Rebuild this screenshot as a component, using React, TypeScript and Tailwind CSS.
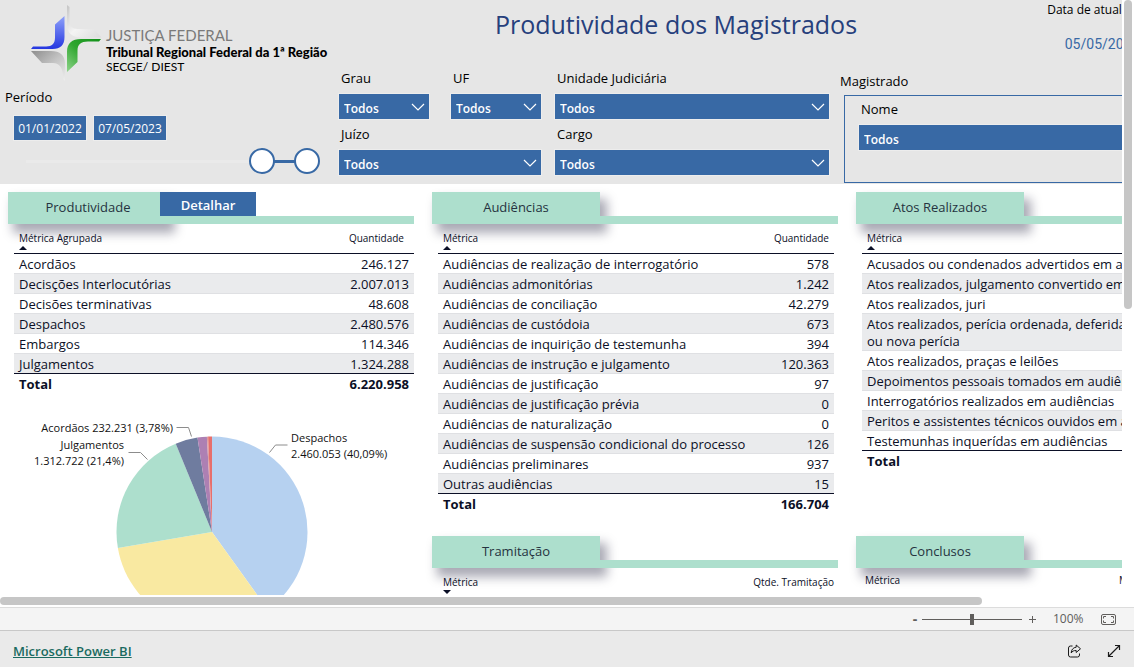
import { useState, type ReactNode } from "react";

type Row = [string, string];

const produtividade: Row[] = [
  ["Acordãos", "246.127"],
  ["Decisções Interlocutórias", "2.007.013"],
  ["Decisões terminativas", "48.608"],
  ["Despachos", "2.480.576"],
  ["Embargos", "114.346"],
  ["Julgamentos", "1.324.288"],
];

const audiencias: Row[] = [
  ["Audiências de realização de interrogatório", "578"],
  ["Audiências admonitórias", "1.242"],
  ["Audiências de conciliação", "42.279"],
  ["Audiências de custódoia", "673"],
  ["Audiências de inquirição de testemunha", "394"],
  ["Audiências de instrução e julgamento", "120.363"],
  ["Audiências de justificação", "97"],
  ["Audiências de justificação prévia", "0"],
  ["Audiências de naturalização", "0"],
  ["Audiências de suspensão condicional do processo", "126"],
  ["Audiências preliminares", "937"],
  ["Outras audiências", "15"],
];

const atos: Row[] = [
  ["Acusados ou condenados advertidos em audiência", ""],
  ["Atos realizados, julgamento convertido em diligência", ""],
  ["Atos realizados, juri", ""],
  ["Atos realizados, perícia ordenada, deferida/indeferida\nou nova perícia", ""],
  ["Atos realizados, praças e leilões", ""],
  ["Depoimentos pessoais tomados em audiências", ""],
  ["Interrogatórios realizados em audiências", ""],
  ["Peritos e assistentes técnicos ouvidos em audiências", ""],
  ["Testemunhas inquerídas em audiências", ""],
];

function Filter({ id, label, className = "" }: { id: string; label: string; className?: string }) {
  return (
    <div className={`flex flex-col gap-[7px] ${className}`}>
      <label htmlFor={id} className="pl-0.5 text-[13px] leading-[17px] text-black">
        {label}
      </label>
      <div className="relative">
        <select
          id={id}
          className="block h-[25px] w-full appearance-none bg-[#3869a5] pt-1 pl-[5px] text-xs font-semibold text-white outline-1 outline-[#ededed]"
        >
          <option>Todos</option>
        </select>
        <svg className="pointer-events-none absolute top-2 right-1 h-[10px] w-[14px]" viewBox="0 0 14 10" fill="none" stroke="white" strokeWidth="1.2">
          <path d="M1 2l6 6 6-6" />
        </svg>
      </div>
    </div>
  );
}

function SectionHeader({ title, action }: { title: string; action?: ReactNode }) {
  return (
    <div className="flex h-8">
      <h2
        className={`flex items-center justify-center bg-[#addfcd] text-[13px] text-[#25333f] shadow-[6px_8px_10px_1px_rgba(20,20,50,0.36)] ${action ? "w-40" : "w-42"}`}
      >
        {title}
      </h2>
      <div className="relative flex flex-1 flex-col justify-end">
        {action}
        <div className="h-2 bg-[#addfcd]" />
      </div>
    </div>
  );
}

function Caret({ down = false }: { down?: boolean }) {
  return (
    <svg className="block h-1 w-2" viewBox="0 0 8 4" fill="#0b0f26">
      <path d={down ? "M0 0h8L4 4z" : "M0 4h8L4 0z"} />
    </svg>
  );
}

function MetricTable({
  heading,
  valueHeading,
  rows,
  total,
  valuePad = "pr-[5px]",
  className = "",
}: {
  heading: string;
  valueHeading: string;
  rows: Row[];
  total: string;
  valuePad?: string;
  className?: string;
}) {
  return (
    <div className={`relative ${className}`}>
      <table className="w-full border-separate border-spacing-0 text-[13px] leading-[17px] whitespace-pre text-[#0b0f26]">
        <thead className="text-[10px] leading-[14px]">
          <tr>
            <th className="border-b border-[#0b0f26] pt-[7px] pb-[3px] pl-[5px] text-left font-normal">
              {heading}
              <div className="pt-px">
                <Caret />
              </div>
            </th>
            <th className={`border-b border-[#0b0f26] pt-[7px] text-right align-top font-normal ${valuePad}`}>{valueHeading}</th>
          </tr>
        </thead>
        <tbody>
          {rows.map(([name, value], i) => {
            const line = i === rows.length - 1 ? "border-[#0b0f26]" : "border-[#dfe0e3]";
            return (
              <tr key={name} className={i % 2 ? "bg-[#eaebed]" : ""}>
                <td className={`border-b pt-0.5 pl-[5px] ${line}`}>{name}</td>
                <td className={`border-b pt-0.5 pr-[5px] text-right ${line}`}>{value}</td>
              </tr>
            );
          })}
        </tbody>
        <tfoot>
          <tr className="font-bold">
            <td className="pt-0.5 pl-[5px]">Total</td>
            <td className="pt-0.5 pr-[5px] text-right">{total}</td>
          </tr>
        </tfoot>
      </table>
    </div>
  );
}

const CX = 204;
const CY = 132;
const R = 95.5;
const slices = [
  { from: 0, to: 0.4009, color: "#b6d1f0" },
  { from: 0.4009, to: 0.723, color: "#f9e9a1" },
  { from: 0.723, to: 0.938, color: "#addfcd" },
  { from: 0.938, to: 0.9757, color: "#6f7c9f" },
  { from: 0.9757, to: 0.9915, color: "#ad80b3" },
  { from: 0.9915, to: 0.9935, color: "#dc9a9c" },
  { from: 0.9935, to: 1, color: "#e76f6c" },
];

function arc(from: number, to: number) {
  const p = (t: number) =>
    `${(CX + R * Math.sin(t * 2 * Math.PI)).toFixed(2)} ${(CY - R * Math.cos(t * 2 * Math.PI)).toFixed(2)}`;
  return `M${CX} ${CY}L${p(from)}A${R} ${R} 0 0 1 ${p(to)}Z`;
}

function PieChart() {
  return (
    <svg className="mt-[7px] block h-[240px] w-[406px]" viewBox="0 0 406 240" role="img" aria-label="Produtividade por métrica">
      {slices.map((s) => (
        <path key={s.color} d={arc(s.from, s.to)} fill={s.color} />
      ))}
      <g fill="none" stroke="#8c8c8c">
        <path d="M168.500 27.500h12l3 9" />
        <path d="M120.500 52.500h12l7 7" />
        <path d="M261.500 52.500l6-7.500h12" />
      </g>
      <g className="text-[11px]" fill="#111">
        <text x="165" y="32" textAnchor="end">Acordãos 232.231 (3,78%)</text>
        <text x="116" y="49" textAnchor="end">Julgamentos</text>
        <text x="116" y="65" textAnchor="end">1.312.722 (21,4%)</text>
        <text x="283" y="42">Despachos</text>
        <text x="283" y="58">2.460.053 (40,09%)</text>
      </g>
    </svg>
  );
}

function Logo() {
  return (
    <svg className="h-[76px] w-[72px]" viewBox="0 0 72 76">
      <defs>
        <linearGradient id="lb" x1="0" y1="0" x2="0" y2="1">
          <stop offset="0" stopColor="#8fa2fa" />
          <stop offset="1" stopColor="#2436e0" />
        </linearGradient>
        <linearGradient id="lg" x1="1" y1="0" x2="0" y2="1">
          <stop offset="0" stopColor="#12901a" />
          <stop offset="0.5" stopColor="#2fa62f" />
          <stop offset="1" stopColor="#8ed48a" />
        </linearGradient>
        <linearGradient id="lw" x1="0" y1="0" x2="1" y2="1">
          <stop offset="0" stopColor="#c4c4c4" />
          <stop offset="0.5" stopColor="#f4f4f4" />
          <stop offset="1" stopColor="#dcdcdc" />
        </linearGradient>
        <linearGradient id="ls" x1="0" y1="0" x2="1" y2="1">
          <stop offset="0" stopColor="#8d8d8d" />
          <stop offset="0.5" stopColor="#c2c2c2" />
          <stop offset="1" stopColor="#eeeeee" />
        </linearGradient>
      </defs>
      <path d="M34.500 11v21c0 8-4 12-12 12H1l2-2.500h13c6 0 9-3 9-9V19.500z" fill="url(#lb)" />
      <path d="M37 0l2.500 2v14c0 5 3 8 8 8l17 .5 7 8H51c-9 0-14-5-14-13z" fill="url(#lw)" />
      <path d="M1 46h20c9 0 14 4 14 13v17l-2-2V69c-1-7-4-11-10-11H12z" fill="url(#ls)" />
      <path d="M71 34l-2 2.500H58c-7 0-10.500 3-10.500 9V57L37 67V47c0-9 5-13 14-13z" fill="url(#lg)" />
    </svg>
  );
}

function PeriodSlider() {
  const [start, setStart] = useState(84);
  const [end, setEnd] = useState(100);
  const range =
    "pointer-events-none absolute inset-0 h-full w-full appearance-none bg-transparent [&::-webkit-slider-thumb]:pointer-events-auto [&::-webkit-slider-thumb]:size-[26px] [&::-webkit-slider-thumb]:appearance-none [&::-webkit-slider-thumb]:rounded-full [&::-webkit-slider-thumb]:border-2 [&::-webkit-slider-thumb]:border-solid [&::-webkit-slider-thumb]:border-[#3869a5] [&::-webkit-slider-thumb]:bg-white";
  return (
    <div className="relative mt-2 mr-[19px] ml-[13px] flex h-[26px] items-center px-[13px]">
      <div className="flex h-[3px] w-full bg-[#eaeaea]">
        <div style={{ width: `${start}%` }} />
        <div className="bg-[#3869a5]" style={{ width: `${end - start}%` }} />
      </div>
      <input type="range" aria-label="Início do período" className={range} value={start} onChange={(e) => setStart(Math.min(+e.target.value, end))} />
      <input type="range" aria-label="Fim do período" className={range} value={end} onChange={(e) => setEnd(Math.max(+e.target.value, start))} />
    </div>
  );
}

function ReportHeader() {
  const dateBox = "h-6 w-18 bg-[#3869a5] pt-px text-center text-xs text-white outline-1 outline-[#ededed]";
  return (
    <header className="flex h-46 bg-[#e6e6e6]">
      <div className="w-[339px] shrink-0">
        <div className="flex pt-[5px] pl-[30px]">
          <Logo />
          <div className="pt-5 pl-1 font-['Lato',sans-serif] whitespace-nowrap">
            <p className="text-[15px] leading-5 text-[#7a7a7a]">JUSTIÇA FEDERAL</p>
            <p className="text-[13px] leading-[14px] font-black text-black">Tribunal Regional Federal da 1ª Região</p>
            <p className="text-xs leading-4 text-black">SECGE/ DIEST</p>
          </div>
        </div>
        <div role="group" aria-labelledby="periodo" className="pt-2">
          <p id="periodo" className="pl-[5px] text-[13px] leading-[17px] text-black">
            Período
          </p>
          <div className="flex gap-2 pt-[10px] pl-[14px]">
            <input className={dateBox} aria-label="Data inicial" defaultValue="01/01/2022" />
            <input className={dateBox} aria-label="Data final" defaultValue="07/05/2023" />
          </div>
          <PeriodSlider />
        </div>
      </div>
      <div className="flex-1">
        <div className="flex h-[70px]">
          <h1 className="w-[674px] pt-2 text-center text-[25px] leading-8 text-[#26407c]">Produtividade dos Magistrados</h1>
          <div className="w-[178px] pt-px text-center whitespace-nowrap">
            <p className="text-xs leading-[17px] text-black">Data de atualização</p>
            <p className="mt-4 font-['Roboto',sans-serif] text-[14px] leading-5 text-[#3869a5]">05/05/2023</p>
          </div>
        </div>
        <div className="flex gap-[11px]">
          <div className="flex gap-[14px]">
            <div className="grid w-[202px] grid-cols-2 content-start gap-x-[22px] gap-y-[7px]">
              <Filter id="grau" label="Grau" />
              <Filter id="uf" label="UF" />
              <Filter id="juizo" label="Juízo" className="col-span-2" />
            </div>
            <div className="grid w-[274px] content-start gap-y-[7px]">
              <Filter id="unidade" label="Unidade Judiciária" />
              <Filter id="cargo" label="Cargo" />
            </div>
          </div>
          <div className="flex-1 pt-[3px]">
            <p className="text-[13px] leading-[17px] text-black">Magistrado</p>
            <div className="mt-[5px] mr-4 ml-1 h-[88px] border border-[#3869a5] px-[14px] pt-[5px]">
              <Filter id="nome" label="Nome" />
            </div>
          </div>
        </div>
      </div>
    </header>
  );
}

function Report() {
  return (
    <div className="min-h-[1149px] w-[1280px] bg-white">
      <ReportHeader />
      <div className="grid grid-cols-3 gap-x-[18px] pt-2 pr-[18px] pl-2">
        <section>
          <SectionHeader
            title="Produtividade"
            action={
              <button className="-ml-2 h-6 w-24 bg-[#3869a5] pt-1 text-[13px] font-semibold text-white">Detalhar</button>
            }
          />
          <MetricTable heading="Métrica Agrupada" valueHeading="Quantidade" rows={produtividade} total="6.220.958" valuePad="pr-[10px]" className="ml-1.5" />
          <PieChart />
        </section>
        <div>
          <section className="min-h-[344px]">
            <SectionHeader title="Audiências" />
            <MetricTable heading="Métrica" valueHeading="Quantidade" rows={audiencias} total="166.704" className="mr-1 ml-1.5" />
          </section>
          <section>
            <SectionHeader title="Tramitação" />
            <div className="relative mr-1 ml-[11px] flex justify-between pt-[7px] text-[10px] leading-[14px] text-[#0b0f26]">
              <div>
                Métrica
                <div className="pt-px">
                  <Caret down />
                </div>
              </div>
              <span>Qtde. Tramitação</span>
            </div>
          </section>
        </div>
        <div>
          <section className="min-h-[344px]">
            <SectionHeader title="Atos Realizados" />
            <MetricTable heading="Métrica" valueHeading="" rows={atos} total="" className="mr-1 ml-1.5" />
          </section>
          <section>
            <SectionHeader title="Conclusos" />
            <div className="relative ml-[9px] flex pt-[5px] text-[10px] leading-[14px] text-[#0b0f26]">
              <span className="w-[254px]">Métrica</span>
              <span>Magistrado</span>
            </div>
          </section>
        </div>
      </div>
    </div>
  );
}

export default function App() {
  const [zoom, setZoom] = useState(100);
  return (
    <div className="flex h-screen flex-col bg-white font-['Open_Sans','Noto_Sans',sans-serif]">
      <main className="flex min-h-0 flex-1">
        <div className="min-w-0 flex-1 overflow-hidden">
          <Report />
        </div>
        <div className="w-3 pl-0.5">
          <div className="h-[52%] w-2 rounded-full bg-[#c6c6c6]" />
        </div>
      </main>
      <div className="h-3 pt-0.5 pr-3">
        <div className="h-2 w-7/8 rounded-full bg-[#c6c6c6]" />
      </div>
      <div className="flex h-[23px] items-center justify-end border-t border-[#dcdcdc] bg-[#f4f4f4] pr-[18px] text-[#605e5c]">
        <button aria-label="Diminuir zoom" className="w-[14px] text-sm leading-5 font-bold">-</button>
        <input
          type="range"
          aria-label="Zoom"
          min={10}
          max={190}
          value={zoom}
          onChange={(e) => setZoom(+e.target.value)}
          className="h-4 w-[100px] appearance-none bg-[linear-gradient(#605e5c,#605e5c)] bg-[length:100%_1px] bg-center bg-no-repeat [&::-webkit-slider-thumb]:h-[11px] [&::-webkit-slider-thumb]:w-1 [&::-webkit-slider-thumb]:appearance-none [&::-webkit-slider-thumb]:bg-[#605e5c]"
        />
        <button aria-label="Aumentar zoom" className="flex w-5 justify-center">
          <svg className="size-[9px]" viewBox="0 0 9 9" stroke="#605e5c" fill="none">
            <path d="M4.500 1v7M1 4.500h7" />
          </svg>
        </button>
        <output className="ml-[11px] w-[48px] text-xs leading-4">{zoom}%</output>
        <button aria-label="Ajustar à página">
          <svg className="block h-[11px] w-[15px]" viewBox="0 0 15 11" fill="none" stroke="#605e5c">
            <rect x="0.500" y="0.500" width="14" height="10" rx="1.500" />
            <path d="M5 2.500H2.500V4.500M2.500 6.500V8.500H5M10 2.500h2.500V4.500M12.500 6.500V8.500H10" />
          </svg>
        </button>
      </div>
      <footer className="flex h-[37px] items-center justify-between border-t border-[#c8c8c8] bg-[#eaeaea] px-[13px] pt-1">
        <a href="https://powerbi.microsoft.com" className="text-[13px] leading-5 font-semibold text-[#1a6a60] underline">
          Microsoft Power BI
        </a>
        <div className="flex items-center gap-[26px]">
          <button aria-label="Compartilhar">
            <svg className="block size-[14px]" viewBox="0 0 14 14" fill="none" stroke="#1b1b1b" strokeLinejoin="round">
              <path d="M5.500 2H3.500a2 2 0 0 0-2 2v7a2 2 0 0 0 2 2h7a2 2 0 0 0 2-2V9.500" />
              <path d="M9.200 1l4.300 3.800-4.300 3.700V6.500C6.700 6.400 5.200 7.300 4.200 9c.1-3.200 1.900-5.500 5-5.800z" />
            </svg>
          </button>
          <button aria-label="Tela cheia">
            <svg className="block size-[14px]" viewBox="0 0 14 14" fill="none" stroke="#1b1b1b" strokeWidth="1.200">
              <path d="M1.500 12.500l11-11M8 1.500h4.500V6M1.500 8v4.500H6" />
            </svg>
          </button>
        </div>
      </footer>
    </div>
  );
}
